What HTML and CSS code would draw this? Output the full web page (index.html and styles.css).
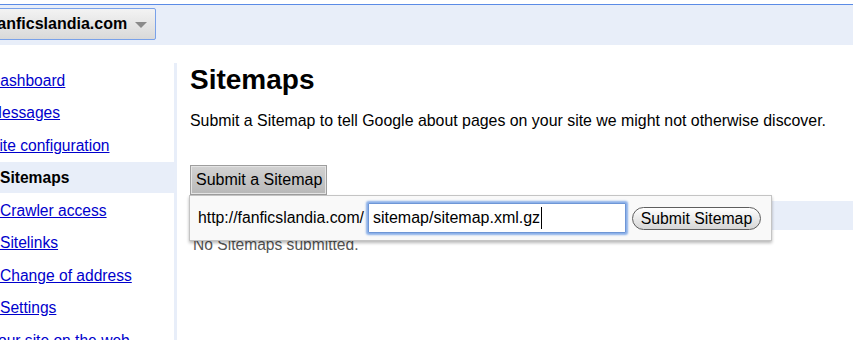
FILE: index.html
```html
<!DOCTYPE html>
<html>
<head>
<meta charset="utf-8">
<link rel="stylesheet" href="styles.css">
</head>
<body>
<div class="header">
  <div class="band">
    <div class="site-select">fanficslandia.com <span class="arrow"></span></div>
  </div>
</div>
<div class="main">
  <div class="sidebar">
    <ul class="nav">
      <li><a href="#">Dashboard</a></li>
      <li><a href="#">Messages</a></li>
      <li><a href="#">Site configuration</a></li>
      <li class="sub active">Sitemaps</li>
      <li class="sub"><a href="#">Crawler access</a></li>
      <li class="sub"><a href="#">Sitelinks</a></li>
      <li class="sub"><a href="#">Change of address</a></li>
      <li class="sub"><a href="#">Settings</a></li>
      <li><a href="#">Your site on the web</a></li>
    </ul>
  </div>
  <div class="content">
    <h1 class="title">Sitemaps</h1>
    <p class="intro">Submit a Sitemap to tell Google about pages on your site we might not otherwise discover.</p>
    <div class="submit-area">
      <div class="tab">Submit a Sitemap</div>
      <div class="table-head"></div>
      <div class="empty">No Sitemaps submitted.</div>
      <div class="panel">
        <span class="prefix">http://fanficslandia.com/</span>
        <div class="field">sitemap/sitemap.xml.gz<span class="caret"></span></div>
        <button class="btn">Submit Sitemap</button>
      </div>
    </div>
  </div>
</div>
</body>
</html>
```
FILE: styles.css
```css
html, body {
  margin: 0;
  padding: 0;
  background: #fff;
  overflow: hidden;
}
body {
  font-family: "Liberation Sans", Arial, Helvetica, sans-serif;
  color: #000;
  width: 853px;
  height: 340px;
}
.header {
  padding-top: 4px;
}
.band {
  border-top: 1px solid #5a8be6;
  background: #e8eef9;
  padding-top: 3px;
  box-sizing: border-box;
  height: 41px;
}
.site-select {
  display: inline-flex;
  align-items: center;
  margin-left: -14px;
  padding-left: 5px;
  width: 170px;
  height: 32px;
  box-sizing: border-box;
  border: 1px solid #79a1e9;
  border-radius: 2px;
  background: linear-gradient(#f3f3f3, #d9d9d9);
  font-weight: bold;
  font-size: 16px;
  white-space: nowrap;
}
.arrow {
  display: inline-block;
  width: 0;
  height: 0;
  margin-left: 8px;
  margin-top: 2px;
  border-left: 6px solid transparent;
  border-right: 6px solid transparent;
  border-top: 6px solid #8a8a8a;
}
.main {
  display: flex;
  align-items: stretch;
  height: 295px;
}
.sidebar {
  width: 176.5px;
  padding-top: 18px;
  flex-shrink: 0;
  box-sizing: border-box;
}
.nav {
  list-style: none;
  margin: 0;
  padding: 1.5px 0 0 0;
  border-right: 3.5px solid #e8eef9;
  height: 100%;
  box-sizing: border-box;
}
.nav li {
  height: 31px;
  margin-bottom: 1.5px;
  line-height: 31px;
  font-size: 15.6px;
  margin-left: -11px;
  white-space: nowrap;
}
.nav li.sub {
  margin-left: 0;
}
.nav li.active {
  background: #e8eef9;
  font-weight: bold;
}
.nav a {
  color: #0000cc;
  text-decoration: underline;
}
.content {
  flex: 1;
  padding-left: 13.5px;
  min-width: 0;
}
.title {
  margin: 0;
  padding-top: 18px;
  font-size: 28px;
  line-height: 34px;
  font-weight: bold;
}
.intro {
  margin: 14px 0 0 0;
  font-size: 15.9px;
  line-height: 20px;
  white-space: nowrap;
}
.submit-area {
  position: relative;
  margin-top: 34px;
}
.tab {
  display: inline-block;
  height: 30px;
  box-sizing: border-box;
  padding: 0 5px;
  line-height: 28px;
  font-size: 16px;
  border: 1px solid #9e9e9e;
  box-shadow: inset 0 0 0 1px #e4e4e4;
  background: linear-gradient(#d2d2d2, #b8b8b8);
  width: 137px;
  white-space: nowrap;
}
.table-head {
  margin-top: 6px;
  height: 29px;
  background: #e8eef9;
  margin-left: -1px;
}
.empty {
  margin-top: 5px;
  padding-left: 3px;
  font-size: 15.6px;
  color: #555;
  line-height: 20px;
}
.panel {
  position: absolute;
  left: -1px;
  top: 30px;
  width: 583px;
  height: 46px;
  box-sizing: border-box;
  background: #f9f9f9;
  border: 1px solid #c4c4c4;
  box-shadow: 0 2px 3px rgba(0, 0, 0, 0.28);
  display: flex;
  align-items: center;
  padding-left: 8px;
  font-size: 15.8px;
}
.prefix {
  white-space: nowrap;
}
.field {
  margin-left: 4px;
  width: 258px;
  height: 30px;
  box-sizing: border-box;
  border: 1px solid #6e96d6;
  box-shadow: 0 0 2px 2px #88aee8;
  border-radius: 1px;
  background: #fff;
  padding-left: 4px;
  font-size: 16px;
  white-space: nowrap;
  display: flex;
  align-items: center;
}
.caret {
  display: inline-block;
  width: 1px;
  height: 22px;
  background: #000;
  margin-left: 1px;
}
.btn {
  margin-left: 6px;
  height: 23px;
  padding: 0 6px;
  border: 1px solid #5e5e5e;
  border-radius: 12px;
  background: linear-gradient(#ffffff, #e6e6e6 60%, #d6d6d6);
  font-family: "Liberation Sans", Arial, Helvetica, sans-serif;
  font-size: 15.8px;
  color: #000;
  line-height: 21px;
  width: 129px;
  white-space: nowrap;
}
```
